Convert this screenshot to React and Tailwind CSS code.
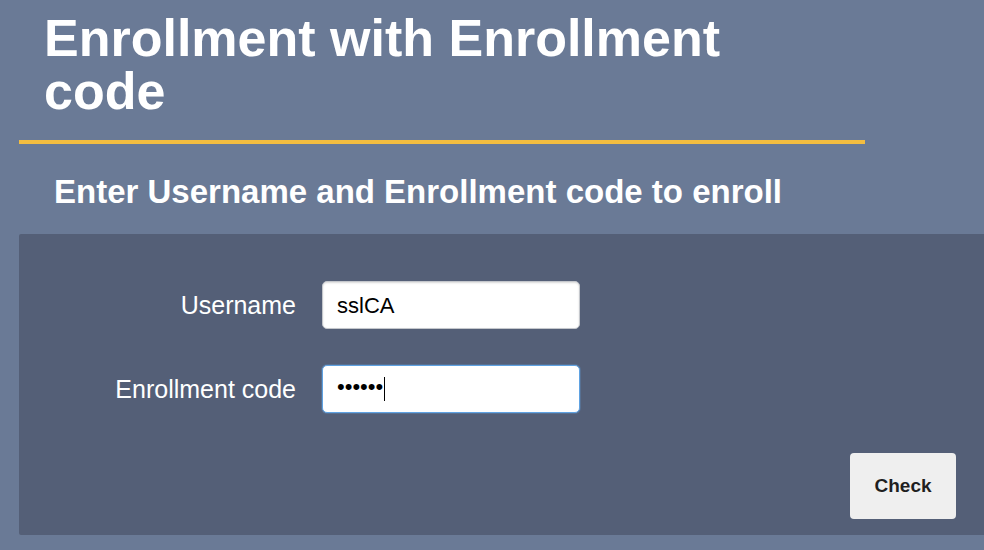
export default function App() {
  return (
    <div
      className="h-[550px] w-full overflow-hidden bg-[#6a7a96] text-white"
      style={{ fontFamily: '"Liberation Sans", Arial, sans-serif' }}
    >
      {/* Page header */}
      <div className="ml-[19px] w-[846px] pl-[25px] pr-[21px] pt-[12px]">
        <h1 className="text-[52px] font-bold leading-[53px] text-white">
          Enrollment with Enrollment code
        </h1>
      </div>
      <div className="ml-[19px] mt-[22px] h-[4px] w-[846px] bg-[#f3bd40]" />

      <h2 className="ml-[54px] mt-[29px] text-[33px] font-bold leading-[38px] text-white">
        Enter Username and Enrollment code to enroll
      </h2>

      {/* Enrollment form */}
      <div className="ml-[19px] mt-[23px] w-[980px] rounded-[2px] bg-[#545f77] pt-[47px] pb-[16px]">
        <div className="grid grid-cols-[277px_258px] gap-x-[26px] gap-y-[36px]">
          <div className="flex items-center justify-end text-[25px] leading-[28px] text-white">
            Username
          </div>
          <div className="flex h-[48px] items-center rounded-[5px] border border-[#c4c7cc] bg-white pl-[14px] text-[22px] text-black shadow-[inset_0_1px_2px_rgba(0,0,0,0.15)]">
            sslCA
          </div>

          <div className="flex items-center justify-end text-[25px] leading-[28px] text-white">
            Enrollment code
          </div>
          <div className="flex h-[48px] items-center rounded-[5px] border border-[#5fa2e2] bg-white pl-[14px] text-[22px] text-black shadow-[0_0_0_1px_rgba(95,162,226,0.25)]">
            <span className="relative top-[-3px]">••••••</span>
            <span className="ml-[1px] h-[24px] w-[1px] bg-black" />
          </div>
        </div>

        <div className="mt-[40px] flex w-[937px] justify-end">
          <button className="h-[66px] w-[106px] rounded-[4px] bg-[#efefef] text-[19px] font-bold text-[#1f1f1f]">
            Check
          </button>
        </div>
      </div>
    </div>
  );
}
